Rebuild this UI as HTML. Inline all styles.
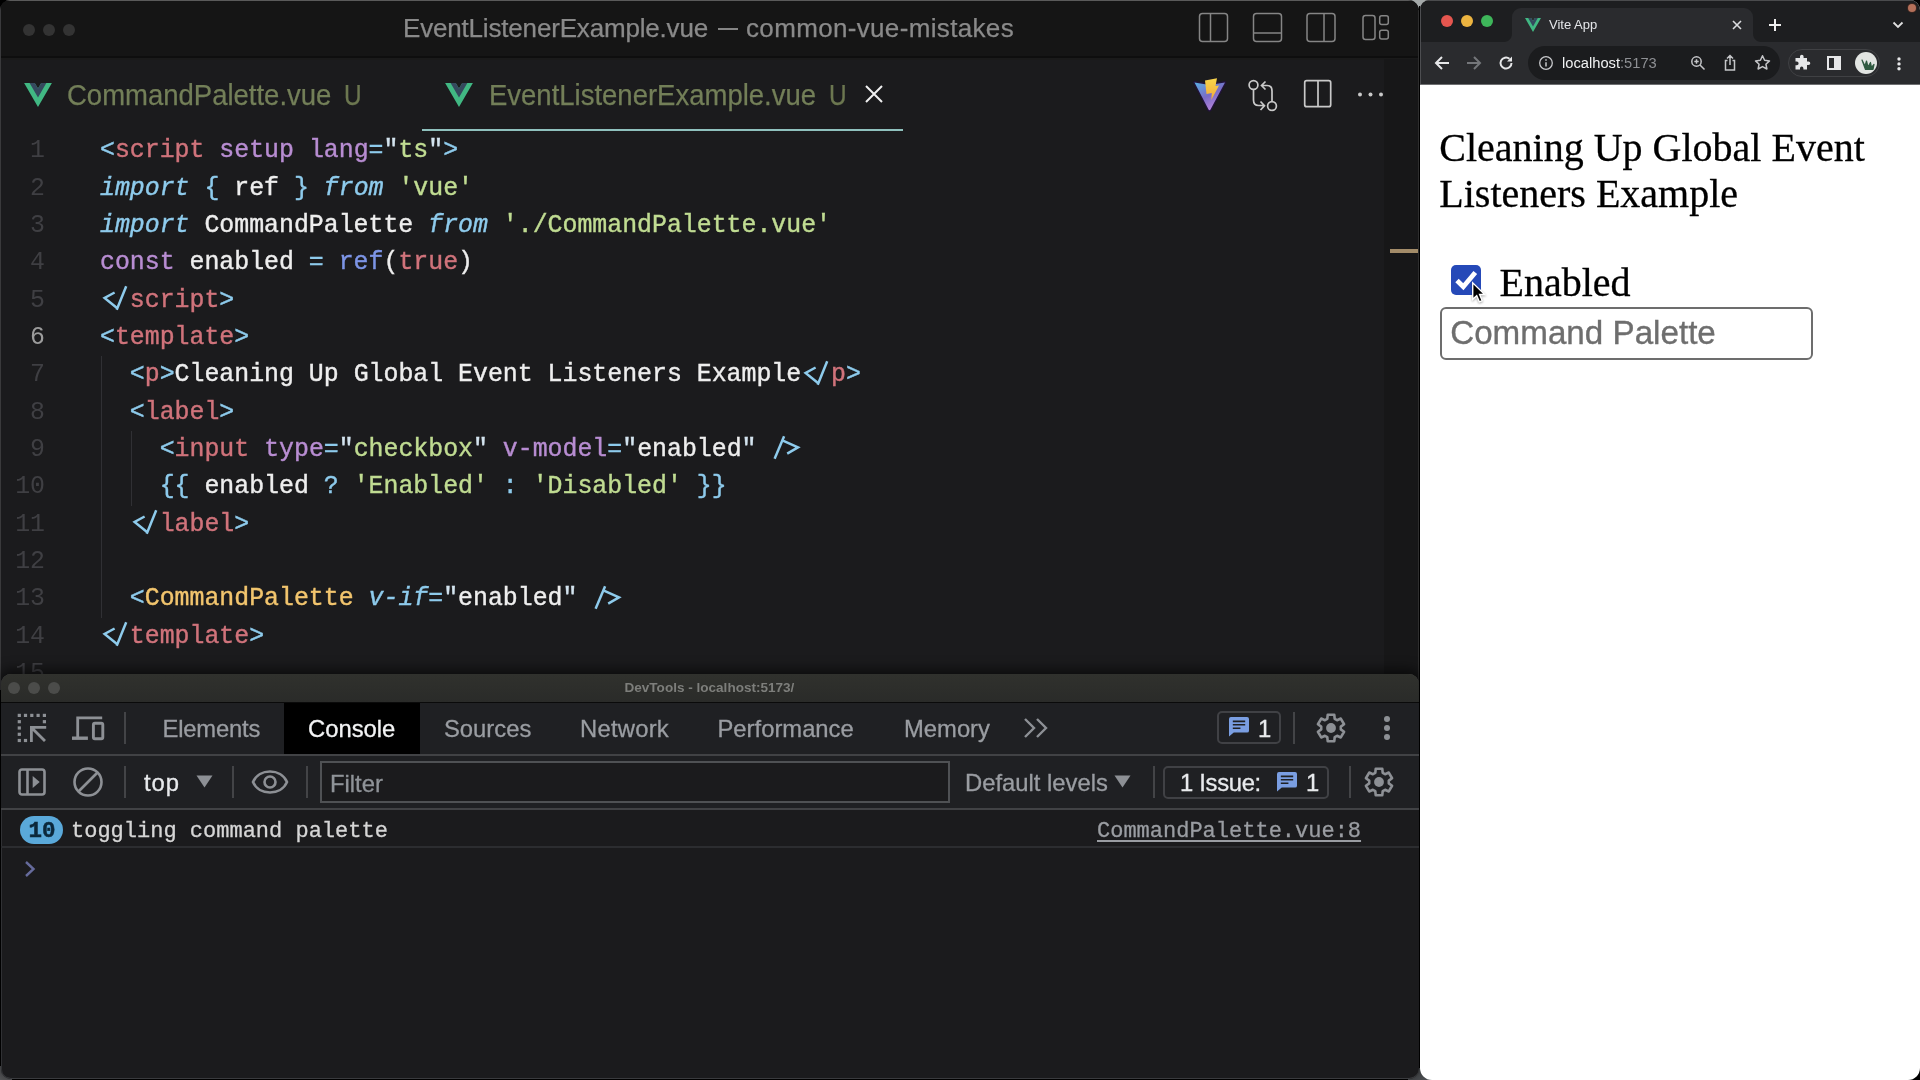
<!DOCTYPE html>
<html>
<head>
<meta charset="utf-8">
<title>screen</title>
<style>
*{box-sizing:border-box;margin:0;padding:0}
html,body{width:1920px;height:1080px;overflow:hidden;background:#000;font-family:"Liberation Sans",sans-serif}
div,span,svg{position:absolute}
span.c{position:static}
.dot{width:12px;height:12px;border-radius:50%}
.tabtxt{top:78.5px;font-size:29px;transform:scaleX(.948);transform-origin:0 0;line-height:32px;color:#737f58;white-space:pre;-webkit-text-stroke:0.25px currentColor}
.code{left:100px;font-family:"Liberation Mono",monospace;font-size:24.87px;line-height:37.33px;height:37.33px;white-space:pre;color:#eeeeee;-webkit-text-stroke:0.4px currentColor}
.code span{position:static}
.ln{left:0;width:45px;text-align:right;font-family:"Liberation Mono",monospace;font-size:24.87px;line-height:37.33px;height:37.33px;color:#46464a}
.p{color:#8ecbec}.t{color:#d0737b}.a{color:#b88dd2}.s{color:#c0dc92}.k{color:#8ecbec;font-style:italic}.f{color:#7d95e6}.y{color:#f2c56e}.q{color:#d3e3ee}.i{font-style:italic;color:#8ecbec}
.dtab{top:714px;font-size:23.8px;line-height:30px;color:#9a9da2;white-space:pre;-webkit-text-stroke:0.3px currentColor}
.sep{width:2px;background:#434447}
.serif{font-family:"Liberation Serif",serif;font-size:40px;line-height:46px;color:#000;white-space:pre;-webkit-text-stroke:0.3px #000}
</style>
</head>
<body>
<div id="root" style="left:0;top:0;width:1920px;height:1080px;will-change:transform">
<!-- desktop wedge -->
<div style="left:1408px;top:0;width:24px;height:9px;background:#a4a9a9"></div>
<div style="left:1419px;top:6px;width:1px;height:1074px;background:#000"></div>
<div style="left:1408px;top:1068px;width:26px;height:12px;background:#4c4f52"></div>
<div style="left:0;top:1066px;width:12px;height:14px;background:#58595b"></div>
<!-- VS CODE window -->
<div style="left:0;top:0;width:1419px;height:690px;background:#1b1b1d;border-radius:10px 11px 0 0;overflow:hidden">
 <div style="left:0;top:0;width:1419px;height:56px;background:#151515"></div>
 <div style="left:0;top:56px;width:1419px;height:2px;background:#0e0e0e"></div>
 <div style="left:0;top:58px;width:1419px;height:2px;background:#1a1a1a"></div>
 <div style="left:0;top:0;width:1419px;height:1px;background:#5a5a5a"></div>
 <div style="left:0;top:0;width:1px;height:690px;background:#3a3a3c"></div>
 <div style="left:1384px;top:59px;width:35px;height:631px;background:#171718"></div>
 <div style="left:1390px;top:249px;width:28px;height:4px;background:#a38c69"></div>
 <div style="left:1418px;top:10px;width:1px;height:680px;background:#2e2e2e"></div>
</div>
<div class="dot" style="left:23px;top:24px;background:#333"></div>
<div class="dot" style="left:43px;top:24px;background:#333"></div>
<div class="dot" style="left:63px;top:24px;background:#333"></div>
<div style="left:403px;top:13px;font-size:26px;line-height:30px;color:#8a8a8a;white-space:pre;letter-spacing:-0.18px;-webkit-text-stroke:0.25px #8a8a8a">EventListenerExample.vue</div>
<div style="left:717.5px;top:27.5px;width:20px;height:2px;background:#858585"></div>
<div style="left:746px;top:13px;font-size:26px;line-height:30px;color:#8a8a8a;white-space:pre;letter-spacing:0.34px;-webkit-text-stroke:0.25px #8a8a8a">common-vue-mistakes</div>
<!-- tabs -->
<svg style="left:24px;top:83px" width="28" height="24" viewBox="0 0 256 221"><path d="M204.8 0H256L128 220.8 0 0h97.92L128 51.2 157.44 0h47.36z" fill="#41b883"/><path d="M50.56 0L128 133.12 204.8 0h-47.36L128 51.2 97.92 0H50.56z" fill="#35495e"/></svg>
<div class="tabtxt" style="left:67px">CommandPalette.vue</div>
<div class="tabtxt" style="left:344px;color:#6c7750;transform:scaleX(.84);transform-origin:0 0">U</div>
<svg style="left:445px;top:83px" width="28" height="24" viewBox="0 0 256 221"><path d="M204.8 0H256L128 220.8 0 0h97.92L128 51.2 157.44 0h47.36z" fill="#41b883"/><path d="M50.56 0L128 133.12 204.8 0h-47.36L128 51.2 97.92 0H50.56z" fill="#35495e"/></svg>
<div class="tabtxt" style="left:488.5px">EventListenerExample.vue</div>
<div class="tabtxt" style="left:828.5px;color:#6c7750;transform:scaleX(.84);transform-origin:0 0">U</div>
<svg style="left:864px;top:84px" width="20" height="20" viewBox="0 0 20 20"><path d="M2 2L18 18M18 2L2 18" stroke="#f0f0f0" stroke-width="2" fill="none"/></svg>
<div style="left:422px;top:129px;width:481px;height:2px;background:#8fc1bd"></div>
<!-- vscode title icons -->
<svg style="left:1190px;top:5px" width="210" height="46" viewBox="1190 5 210 46" fill="none" stroke="#858585" stroke-width="1.5">
 <rect x="1199.5" y="13.5" width="28" height="28" rx="3"/><path d="M1210.5 13.5V41.5"/>
 <rect x="1253.5" y="13.5" width="28" height="28" rx="3"/><path d="M1253.5 33V33H1281.5"/>
 <rect x="1307" y="13.5" width="28" height="28" rx="3"/><path d="M1324 13.5V41.5"/>
 <rect x="1363" y="15.5" width="12" height="24" rx="2.5"/><rect x="1379.700" y="15.800" width="8.600" height="8.800" rx="2"/><rect x="1379.700" y="30.300" width="8.600" height="8.800" rx="2"/>
</svg>
<!-- vite logo -->
<svg style="left:1192px;top:76px;filter:drop-shadow(0.8px 0.8px 0 #22143a)" width="36" height="38" viewBox="0 0 36 38">
 <defs><linearGradient id="vg" x1="0" y1="0" x2="0.6" y2="1"><stop offset="0" stop-color="#58b0e4"/><stop offset="0.55" stop-color="#7a6cc6"/><stop offset="1" stop-color="#b884dc"/></linearGradient>
 <linearGradient id="vy" x1="0" y1="0" x2="0" y2="1"><stop offset="0" stop-color="#f7d64a"/><stop offset="1" stop-color="#f2a93b"/></linearGradient></defs>
 <path d="M2.500 6.500L17.500 9L33 6.500L18.500 33.500Q17.500 35 16.500 33.500Z" fill="url(#vg)" stroke="#22143a" stroke-width="2.400" stroke-linejoin="round" paint-order="stroke"/>
 <path d="M13 4.500L25 2.200L23.500 10L27 9.500L19.300 24L19.800 17L14.500 18Z" fill="url(#vy)"/>
</svg>
<!-- git compare -->
<svg style="left:1244px;top:76px" width="38" height="40" viewBox="1244 76 38 40" fill="none" stroke="#c9c9c9" stroke-width="1.7">
 <circle cx="1253.5" cy="85" r="4.4"/><circle cx="1272" cy="106" r="4.4"/>
 <path d="M1253.5 89.5V100Q1253.5 105.500 1258.500 105.500H1264M1260.500 101.500L1264.500 105.700L1260.500 110"/>
 <path d="M1272 101.500V91Q1272 85.500 1267 85.500H1262M1265.500 81.500L1261.500 85.500L1265.500 89.500"/>
</svg>
<!-- split editor -->
<svg style="left:1300px;top:76px" width="36" height="36" viewBox="1300 76 36 36" fill="none" stroke="#c9c9c9" stroke-width="1.7"><rect x="1304.700" y="80.700" width="26" height="26" rx="2"/><path d="M1318 80.700V106.700"/></svg>
<svg style="left:1355px;top:90px" width="32" height="10" viewBox="1355 90 32 10" fill="#c9c9c9"><circle cx="1360" cy="94.500" r="2"/><circle cx="1370.500" cy="94.500" r="2"/><circle cx="1381" cy="94.500" r="2"/></svg>
<!-- editor -->
<div style="left:101px;top:356.4px;width:1px;height:261.3px;background:#303034"></div>
<div style="left:131px;top:431.1px;width:1px;height:74.7px;background:#303034"></div>
<div class="ln" style="top:132.40px;color:#3f3f43">1</div><div class="code" style="top:132.40px"><span class="p">&lt;</span><span class="t">script</span> <span class="a">setup</span> <span class="a">lang</span><span class="p">=</span><span class="q">"</span><span class="s">ts</span><span class="q">"</span><span class="p">&gt;</span></div>
<div class="ln" style="top:169.73px;color:#3f3f43">2</div><div class="code" style="top:169.73px"><span class="k">import</span> <span class="p">{</span> ref <span class="p">}</span> <span class="k">from</span> <span class="s">'vue'</span></div>
<div class="ln" style="top:207.07px;color:#3f3f43">3</div><div class="code" style="top:207.07px"><span class="k">import</span> CommandPalette <span class="k">from</span> <span class="s">'./CommandPalette.vue'</span></div>
<div class="ln" style="top:244.40px;color:#3f3f43">4</div><div class="code" style="top:244.40px"><span class="a">const</span> enabled <span class="p">=</span> <span class="f">ref</span>(<span class="t">true</span>)</div>
<div class="ln" style="top:281.73px;color:#3f3f43">5</div><div class="code" style="top:281.73px"><span class="p">  </span><span class="t">script</span><span class="p">&gt;</span></div>
<div class="ln" style="top:319.06px;color:#9c9c9c">6</div><div class="code" style="top:319.06px"><span class="p">&lt;</span><span class="t">template</span><span class="p">&gt;</span></div>
<div class="ln" style="top:356.40px;color:#3f3f43">7</div><div class="code" style="top:356.40px">  <span class="p">&lt;</span><span class="t">p</span><span class="p">&gt;</span>Cleaning Up Global Event Listeners Example<span class="p">  </span><span class="t">p</span><span class="p">&gt;</span></div>
<div class="ln" style="top:393.73px;color:#3f3f43">8</div><div class="code" style="top:393.73px">  <span class="p">&lt;</span><span class="t">label</span><span class="p">&gt;</span></div>
<div class="ln" style="top:431.06px;color:#3f3f43">9</div><div class="code" style="top:431.06px">    <span class="p">&lt;</span><span class="t">input</span> <span class="a">type</span><span class="p">=</span><span class="q">"</span><span class="s">checkbox</span><span class="q">"</span> <span class="a">v-model</span><span class="p">=</span><span class="q">"</span>enabled<span class="q">"</span> <span class="p">  </span></div>
<div class="ln" style="top:468.40px;color:#3f3f43">10</div><div class="code" style="top:468.40px">    <span class="p">{{</span> enabled <span class="p">?</span> <span class="s">'Enabled'</span> <span class="p">:</span> <span class="s">'Disabled'</span> <span class="p">}}</span></div>
<div class="ln" style="top:505.73px;color:#3f3f43">11</div><div class="code" style="top:505.73px">  <span class="p">  </span><span class="t">label</span><span class="p">&gt;</span></div>
<div class="ln" style="top:543.06px;color:#3f3f43">12</div>
<div class="ln" style="top:580.40px;color:#3f3f43">13</div><div class="code" style="top:580.40px">  <span class="p">&lt;</span><span class="y">CommandPalette</span> <span class="i">v-if</span><span class="p">=</span><span class="q">"</span>enabled<span class="q">"</span> <span class="p">  </span></div>
<div class="ln" style="top:617.73px;color:#3f3f43">14</div><div class="code" style="top:617.73px"><span class="p">  </span><span class="t">template</span><span class="p">&gt;</span></div>
<div class="ln" style="top:655.06px;color:#3f3f43">15</div>
<svg style="left:100.00px;top:283.03px" width="32" height="32" viewBox="0 -24 32 32" fill="none" stroke="#8ecbec" stroke-width="2.5" stroke-linejoin="miter"><path d="M14.6 -14.5L4.6 -9.1L17.3 1.2"/><path d="M16.7 2.8L26.2 -20.7"/></svg>
<svg style="left:801.33px;top:357.70px" width="32" height="32" viewBox="0 -24 32 32" fill="none" stroke="#8ecbec" stroke-width="2.5" stroke-linejoin="miter"><path d="M14.6 -14.5L4.6 -9.1L17.3 1.2"/><path d="M16.7 2.8L26.2 -20.7"/></svg>
<svg style="left:129.84px;top:507.03px" width="32" height="32" viewBox="0 -24 32 32" fill="none" stroke="#8ecbec" stroke-width="2.5" stroke-linejoin="miter"><path d="M14.6 -14.5L4.6 -9.1L17.3 1.2"/><path d="M16.7 2.8L26.2 -20.7"/></svg>
<svg style="left:100.00px;top:619.03px" width="32" height="32" viewBox="0 -24 32 32" fill="none" stroke="#8ecbec" stroke-width="2.5" stroke-linejoin="miter"><path d="M14.6 -14.5L4.6 -9.1L17.3 1.2"/><path d="M16.7 2.8L26.2 -20.7"/></svg>
<svg style="left:771.49px;top:432.36px" width="32" height="32" viewBox="0 -24 32 32" fill="none" stroke="#8ecbec" stroke-width="2.5" stroke-linejoin="miter"><path d="M3.6 2.8L13.1 -19.7"/><path d="M11.9 -15.4L27 -8.6L16.2 -2.4"/></svg>
<svg style="left:592.43px;top:581.70px" width="32" height="32" viewBox="0 -24 32 32" fill="none" stroke="#8ecbec" stroke-width="2.5" stroke-linejoin="miter"><path d="M3.6 2.8L13.1 -19.7"/><path d="M11.9 -15.4L27 -8.6L16.2 -2.4"/></svg>
<!-- DEVTOOLS window -->
<div style="left:1px;top:674px;width:1418px;height:405px;background:#1b1b1d;border-radius:10px 10px 10px 10px;overflow:hidden;box-shadow:inset 1px 0 0 #303134, inset 0 -1px 0 #3a3b3e, inset 0 1px 0 #4a4b47, 0 -3px 12px 2px rgba(0,0,0,.55)">
 <div style="left:0;top:0;width:1418px;height:28px;background:linear-gradient(#30312d,#2a2b29)"></div>
 <div style="left:0;top:28px;width:1418px;height:1px;background:#0a0a0a"></div>
 <div style="left:0;top:29px;width:1418px;height:107px;background:#1f2023"></div>
 <div style="left:283px;top:29px;width:136px;height:51px;background:#000"></div>
 <div style="left:0;top:80px;width:1418px;height:2px;background:#414245"></div>
 <div style="left:0;top:134px;width:1418px;height:2px;background:#414245"></div>
 <div style="left:0;top:172px;width:1418px;height:2px;background:#2c2d30"></div>
</div>
<div class="dot" style="left:8px;top:682px;background:#4b4c4a"></div>
<div class="dot" style="left:28px;top:682px;background:#4b4c4a"></div>
<div class="dot" style="left:48px;top:682px;background:#4b4c4a"></div>
<div style="left:624.5px;top:679px;font-size:13.55px;line-height:18px;font-weight:bold;color:#7d7e7b;white-space:pre">DevTools - localhost:5173/</div>
<!-- tab bar icons -->
<svg style="left:10px;top:705px" width="50" height="45" viewBox="10 705 50 45"><g fill="#8d9095"><rect x="17.7" y="713.8" width="3.2" height="3.2"/><rect x="23.9" y="713.8" width="3.2" height="3.2"/><rect x="30.2" y="713.8" width="3.2" height="3.2"/><rect x="36.5" y="713.8" width="3.2" height="3.2"/><rect x="42.8" y="713.8" width="3.2" height="3.2"/><rect x="17.7" y="720.1" width="3.2" height="3.2"/><rect x="17.7" y="726.4" width="3.2" height="3.2"/><rect x="17.7" y="732.7" width="3.2" height="3.2"/><rect x="17.7" y="738.9" width="3.2" height="3.2"/><rect x="23.9" y="738.9" width="3.2" height="3.2"/><rect x="42.8" y="720.1" width="3.2" height="3.2"/></g><path d="M46.200 727.400H31.400V742M31.400 727.400L45 741" fill="none" stroke="#8d9095" stroke-width="2.8"/></svg>
<svg style="left:66px;top:705px" width="50" height="45" viewBox="66 705 50 45" fill="none" stroke="#8d9095"><path d="M102.200 717.800H77.700V737" stroke-width="2.800"/><path d="M72 738.200H87.900" stroke-width="3.400"/><rect x="93.400" y="723.300" width="9.400" height="15.400" rx="1.500" stroke-width="2.900"/></svg>
<div class="sep" style="left:124px;top:712px;height:32px"></div>
<div class="dtab" style="left:162.5px;letter-spacing:-0.2px">Elements</div>
<div class="dtab" style="left:308px;color:#f3f4f5">Console</div>
<div class="dtab" style="left:444px">Sources</div>
<div class="dtab" style="left:580px;letter-spacing:0.24px">Network</div>
<div class="dtab" style="left:717.5px">Performance</div>
<div class="dtab" style="left:904px">Memory</div>
<svg style="left:1022px;top:716px" width="28" height="24" viewBox="0 0 28 24" fill="none" stroke="#8d9095" stroke-width="2.4"><path d="M3 3L12 12L3 21M15 3L24 12L15 21"/></svg>
<!-- issue badge -->
<div style="left:1217px;top:711px;width:64px;height:33px;border:2px solid #404145;border-radius:5px"></div>
<svg style="left:1229px;top:717px" width="20" height="19.500" viewBox="0 0 21 20" preserveAspectRatio="none"><path d="M2 0H19A2 2 0 0 1 21 2V14A2 2 0 0 1 19 16H5L0 20V2A2 2 0 0 1 2 0Z" fill="#7a9ee2"/><path d="M4 4.5H17M4 8H17M4 11.5H12" stroke="#1f2023" stroke-width="1.6"/></svg>
<div class="dtab" style="left:1258px;color:#e8eaed">1</div>
<div class="sep" style="left:1293px;top:712px;height:32px"></div>
<!-- toolbar -->
<svg style="left:16px;top:766px" width="32" height="32" viewBox="0 0 32 32" fill="none" stroke="#8d9095" stroke-width="2.6"><rect x="3.500" y="3.500" width="25" height="25" rx="2.500"/><path d="M11.500 3.500V28.500"/><path d="M16.700 10L23.700 16L16.700 22Z" fill="#8d9095" stroke="none"/></svg>
<svg style="left:72px;top:766px" width="32" height="32" viewBox="0 0 32 32" fill="none" stroke="#8d9095" stroke-width="2.6"><circle cx="16" cy="16" r="13.5"/><path d="M6.5 25.5L25.5 6.5"/></svg>
<div class="sep" style="left:124px;top:766px;height:32px"></div>
<div class="dtab" style="left:144px;top:768px;color:#e8eaed;letter-spacing:0.9px">top</div>
<svg style="left:196px;top:775px" width="17" height="13" viewBox="0 0 17 13"><path d="M0.5 0.5H16.5L8.5 12.5Z" fill="#8d9095"/></svg>
<div class="sep" style="left:232px;top:766px;height:32px"></div>
<svg style="left:251px;top:769px" width="38" height="26" viewBox="0 0 38 26" fill="none" stroke="#8d9095" stroke-width="2.6"><path d="M2 13C8 -1 30 -1 36 13C30 27 8 27 2 13Z"/><circle cx="19" cy="13" r="5.5"/></svg>
<div class="sep" style="left:306px;top:766px;height:32px"></div>
<div style="left:320px;top:761px;width:630px;height:42px;border:2px solid #4f5154;background:#1b1b1d"></div>
<div class="dtab" style="left:330px;top:769px;color:#8f9398">Filter</div>
<div class="dtab" style="left:965px;top:768px">Default levels</div>
<svg style="left:1114px;top:775px" width="17" height="13" viewBox="0 0 17 13"><path d="M0.5 0.5H16.5L8.5 12.5Z" fill="#8d9095"/></svg>
<div class="sep" style="left:1153px;top:766px;height:32px"></div>
<div style="left:1163px;top:766px;width:166px;height:33px;border:2px solid #404145;border-radius:5px"></div>
<div class="dtab" style="left:1180px;top:768px;color:#e8eaed;letter-spacing:-0.3px">1 Issue:</div>
<svg style="left:1277px;top:772px" width="20" height="19.500" viewBox="0 0 21 20" preserveAspectRatio="none"><path d="M2 0H19A2 2 0 0 1 21 2V14A2 2 0 0 1 19 16H5L0 20V2A2 2 0 0 1 2 0Z" fill="#7a9ee2"/><path d="M4 4.5H17M4 8H17M4 11.5H12" stroke="#1f2023" stroke-width="1.6"/></svg>
<div class="dtab" style="left:1306px;top:768px;color:#e8eaed">1</div>
<div class="sep" style="left:1349px;top:766px;height:32px"></div>
<!-- console -->
<div style="left:20px;top:816px;width:43px;height:28px;border-radius:14px;background:#5aa9da"></div>
<div style="left:28.5px;top:818px;font-family:'Liberation Mono',monospace;font-weight:bold;font-size:22.5px;line-height:27px;color:#0b283b;white-space:pre;-webkit-text-stroke:0.5px #0b283b">10</div>
<div style="left:71px;top:817.5px;font-family:'Liberation Mono',monospace;font-size:22px;line-height:28px;color:#d6d6d6;white-space:pre;-webkit-text-stroke:0.3px #d6d6d6">toggling command palette</div>
<div style="left:1097px;top:817.5px;font-family:'Liberation Mono',monospace;font-size:22px;line-height:28px;color:#9a9da2;white-space:pre;-webkit-text-stroke:0.3px #9a9da2;text-decoration:underline;text-underline-offset:3px;text-decoration-thickness:2px">CommandPalette.vue:8</div>
<svg style="left:23px;top:860px" width="14" height="18" viewBox="0 0 14 18" fill="none" stroke="#666b9c" stroke-width="2.4"><path d="M3 2L10.5 9L3 16"/></svg>
<!-- devtools gears + kebab -->
<svg style="left:1314px;top:711px" width="34" height="34" viewBox="-17 -17 34 34" fill="none" stroke="#8d9095" stroke-width="2.6"><path d="M-3.71 -9.18L-3.29 -13.20L3.29 -13.20L3.71 -9.18L6.10 -7.80L9.78 -9.45L13.07 -3.75L9.80 -1.38L9.80 1.38L13.07 3.75L9.78 9.45L6.10 7.80L3.71 9.18L3.29 13.20L-3.29 13.20L-3.71 9.18L-6.10 7.80L-9.78 9.45L-13.07 3.75L-9.80 1.38L-9.80 -1.38L-13.07 -3.75L-9.78 -9.45L-6.10 -7.80Z" stroke-linejoin="round"/><circle cx="0" cy="0" r="4.9" fill="#8d9095" stroke="none"/></svg>
<svg style="left:1362px;top:765px" width="34" height="34" viewBox="-17 -17 34 34" fill="none" stroke="#8d9095" stroke-width="2.6"><path d="M-3.71 -9.18L-3.29 -13.20L3.29 -13.20L3.71 -9.18L6.10 -7.80L9.78 -9.45L13.07 -3.75L9.80 -1.38L9.80 1.38L13.07 3.75L9.78 9.45L6.10 7.80L3.71 9.18L3.29 13.20L-3.29 13.20L-3.71 9.18L-6.10 7.80L-9.78 9.45L-13.07 3.75L-9.80 1.38L-9.80 -1.38L-13.07 -3.75L-9.78 -9.45L-6.10 -7.80Z" stroke-linejoin="round"/><circle cx="0" cy="0" r="4.9" fill="#8d9095" stroke="none"/></svg>
<svg style="left:1383px;top:714px" width="8" height="28" viewBox="0 0 8 28" fill="#8d9095"><circle cx="4" cy="5" r="3"/><circle cx="4" cy="14" r="3"/><circle cx="4" cy="23" r="3"/></svg>
<!-- CHROME window -->
<div style="left:1420px;top:0;width:500px;height:1080px;background:#fff;border-radius:9px 10px 12px 12px;overflow:hidden">
 <div style="left:0;top:0;width:500px;height:42px;background:#1d1e20"></div>
 <div style="left:0;top:0;width:500px;height:1px;background:#4a4b4d"></div>
 <div style="left:92px;top:8px;width:241px;height:34px;background:#2a2b2e;border-radius:9px 9px 0 0"></div>
 <div style="left:0;top:42px;width:500px;height:42px;background:#2a2b2e"></div>
 <div style="left:84px;top:34px;width:8px;height:8px;background:radial-gradient(circle at 0 0,#1d1e20 7.5px,#2a2b2e 8.5px)"></div>
 <div style="left:333px;top:34px;width:8px;height:8px;background:radial-gradient(circle at 100% 0,#1d1e20 7.5px,#2a2b2e 8.5px)"></div>
 <div style="left:0;top:84px;width:500px;height:1px;background:#6e6f71"></div>
 <div style="left:0;top:8px;width:1px;height:76px;background:#4d4e51"></div>
 <div style="left:108px;top:46px;width:252px;height:34px;border-radius:17px;background:#1b1c1e"></div>
 <div style="left:368px;top:49px;width:92px;height:28px;border-radius:14px;border:1px solid #404144"></div>
</div>
<div class="dot" style="left:1441px;top:15px;background:#e5564f"></div>
<div class="dot" style="left:1461px;top:15px;background:#ecb440"></div>
<div class="dot" style="left:1481px;top:15px;background:#3eb65a"></div>
<div style="left:1908px;top:4px;width:8px;height:8px;border-radius:50%;background:#b4705a;box-shadow:0 0 0 1px #3a2620"></div>
<svg style="left:1525px;top:18px" width="16" height="14" viewBox="0 0 256 221"><path d="M204.8 0H256L128 220.8 0 0h97.92L128 51.2 157.44 0h47.36z" fill="#41b883"/><path d="M50.56 0L128 133.12 204.8 0h-47.36L128 51.2 97.92 0H50.56z" fill="#35495e"/></svg>
<div style="left:1549px;top:16px;font-size:13px;line-height:18px;color:#e4e6e9;white-space:pre">Vite App</div>
<svg style="left:1732px;top:20px" width="10" height="10" viewBox="0 0 10 10" fill="none" stroke="#dcdde0" stroke-width="1.6"><path d="M1 1L9 9M9 1L1 9"/></svg>
<svg style="left:1768px;top:18px" width="14" height="14" viewBox="0 0 14 14" fill="none" stroke="#eeeeee" stroke-width="2"><path d="M7 1V13M1 7H13"/></svg>
<svg style="left:1892px;top:21px" width="12" height="8" viewBox="0 0 12 8" fill="none" stroke="#e0e0e0" stroke-width="1.8"><path d="M1.5 1.5L6 6L10.5 1.5"/></svg>
<!-- nav -->
<svg style="left:1434px;top:55px" width="16" height="16" viewBox="0 0 16 16" fill="none" stroke="#e6e7e9" stroke-width="2"><path d="M15 8H2M8 2L2 8L8 14"/></svg>
<svg style="left:1466px;top:55px" width="16" height="16" viewBox="0 0 16 16" fill="none" stroke="#74767a" stroke-width="2"><path d="M1 8H14M8 2L14 8L8 14"/></svg>
<svg style="left:1498px;top:55px" width="16" height="16" viewBox="0 0 16 16" fill="none" stroke="#e6e7e9" stroke-width="2"><path d="M13.5 8A5.5 5.5 0 1 1 11.5 3.8"/><path d="M14 1.5V6.5H9Z" fill="#e6e7e9" stroke="none"/></svg>
<svg style="left:1538px;top:55px" width="16" height="16" viewBox="0 0 16 16" fill="none" stroke="#c8c9cc" stroke-width="1.3"><circle cx="8" cy="8" r="6.3"/><path d="M8 7.2V11.5M8 4.3V5.8" stroke-width="1.5"/></svg>
<div style="left:1562px;top:54px;font-size:14.7px;line-height:18px;color:#f1f2f3;white-space:pre">localhost<span class="c" style="color:#8e9094">:5173</span></div>
<svg style="left:1690px;top:55px" width="16" height="16" viewBox="0 0 16 16" fill="none" stroke="#c4c5c8" stroke-width="1.5"><circle cx="6.5" cy="6.5" r="4.7"/><path d="M10 10L14.5 14.5M4.3 6.5H8.7M6.5 4.3V8.7"/></svg>
<svg style="left:1722px;top:54px" width="16" height="18" viewBox="0 0 16 18" fill="none" stroke="#c4c5c8" stroke-width="1.5"><path d="M5.5 6.5H3.5V16H12.5V6.5H10.5M8 11V1.5M5 4.5L8 1.5L11 4.5"/></svg>
<svg style="left:1754px;top:54px" width="17" height="17" viewBox="0 0 17 17" fill="none" stroke="#c4c5c8" stroke-width="1.5" stroke-linejoin="round"><path d="M8.5 1.8L10.6 6.3L15.5 6.9L11.9 10.2L12.9 15L8.5 12.6L4.1 15L5.1 10.2L1.5 6.9L6.4 6.3Z"/></svg>
<svg style="left:1793px;top:54px" width="18" height="18" viewBox="0 0 18 18"><path d="M7 2.5A1.8 1.8 0 0 1 10.6 2.5V4H14V7.4H15.5A1.8 1.8 0 0 1 15.5 11H14V15.5H10.4V14.2A1.7 1.7 0 0 0 7 14.2V15.5H2.5V11.2H3.8A1.7 1.7 0 0 0 3.8 7.6H2.5V4H7Z" fill="#e6e7e9"/></svg>
<svg style="left:1826px;top:55px" width="16" height="16" viewBox="0 0 16 16" fill="none" stroke="#e6e7e9" stroke-width="2"><rect x="2" y="2" width="12" height="12"/><path d="M10.5 2V14" stroke-width="5"/></svg>
<svg style="left:1855px;top:52px" width="22" height="22" viewBox="0 0 22 22"><circle cx="11" cy="11" r="11" fill="#e2e5e2"/><path d="M7 8L10 14L11.500 9L13 15L15.500 10.500L16.500 15.500L19 12.500L18 17.500L10.500 17.500Z" fill="#2f5a40" stroke="#2f5a40" stroke-width="1.2" stroke-linejoin="round"/></svg>
<svg style="left:1895.500px;top:54.700px" width="6" height="18" viewBox="0 0 6 18" fill="#e6e7e9"><circle cx="3" cy="4" r="1.700"/><circle cx="3" cy="8.900" r="1.700"/><circle cx="3" cy="13.800" r="1.700"/></svg>
<!-- page -->
<div class="serif" style="left:1439.3px;top:124.7px">Cleaning Up Global Event</div>
<div class="serif" style="left:1439.3px;top:170.7px">Listeners Example</div>
<div style="left:1451px;top:265px;width:30px;height:30px;border-radius:5px;background:#2549b8"></div>
<svg style="left:1451px;top:265px" width="30" height="30" viewBox="0 0 30 30" fill="none" stroke="#fff" stroke-width="4.8"><path d="M6 15.5L12.3 21.8L24.3 7.5"/></svg>
<div class="serif" style="left:1499.5px;top:260.4px">Enabled</div>
<div style="left:1440px;top:307px;width:373px;height:53px;border:2px solid #6d6d6d;border-radius:6px;background:#fff"></div>
<div style="left:1450.2px;top:313.8px;font-size:33.2px;line-height:38px;color:#6e6e6e;-webkit-text-stroke:0.35px #6e6e6e;white-space:pre">Command Palette</div>
<svg style="left:1470.5px;top:281px;filter:drop-shadow(0 1px 1px rgba(0,0,0,.35))" width="16" height="23" viewBox="0 0 14 20"><path d="M1.500 1.500V16L5 12.800L7.300 18.200L9.800 17.100L7.500 11.800H12Z" fill="#000" stroke="#fff" stroke-width="1.2"/></svg>
</div>
</body>
</html>
